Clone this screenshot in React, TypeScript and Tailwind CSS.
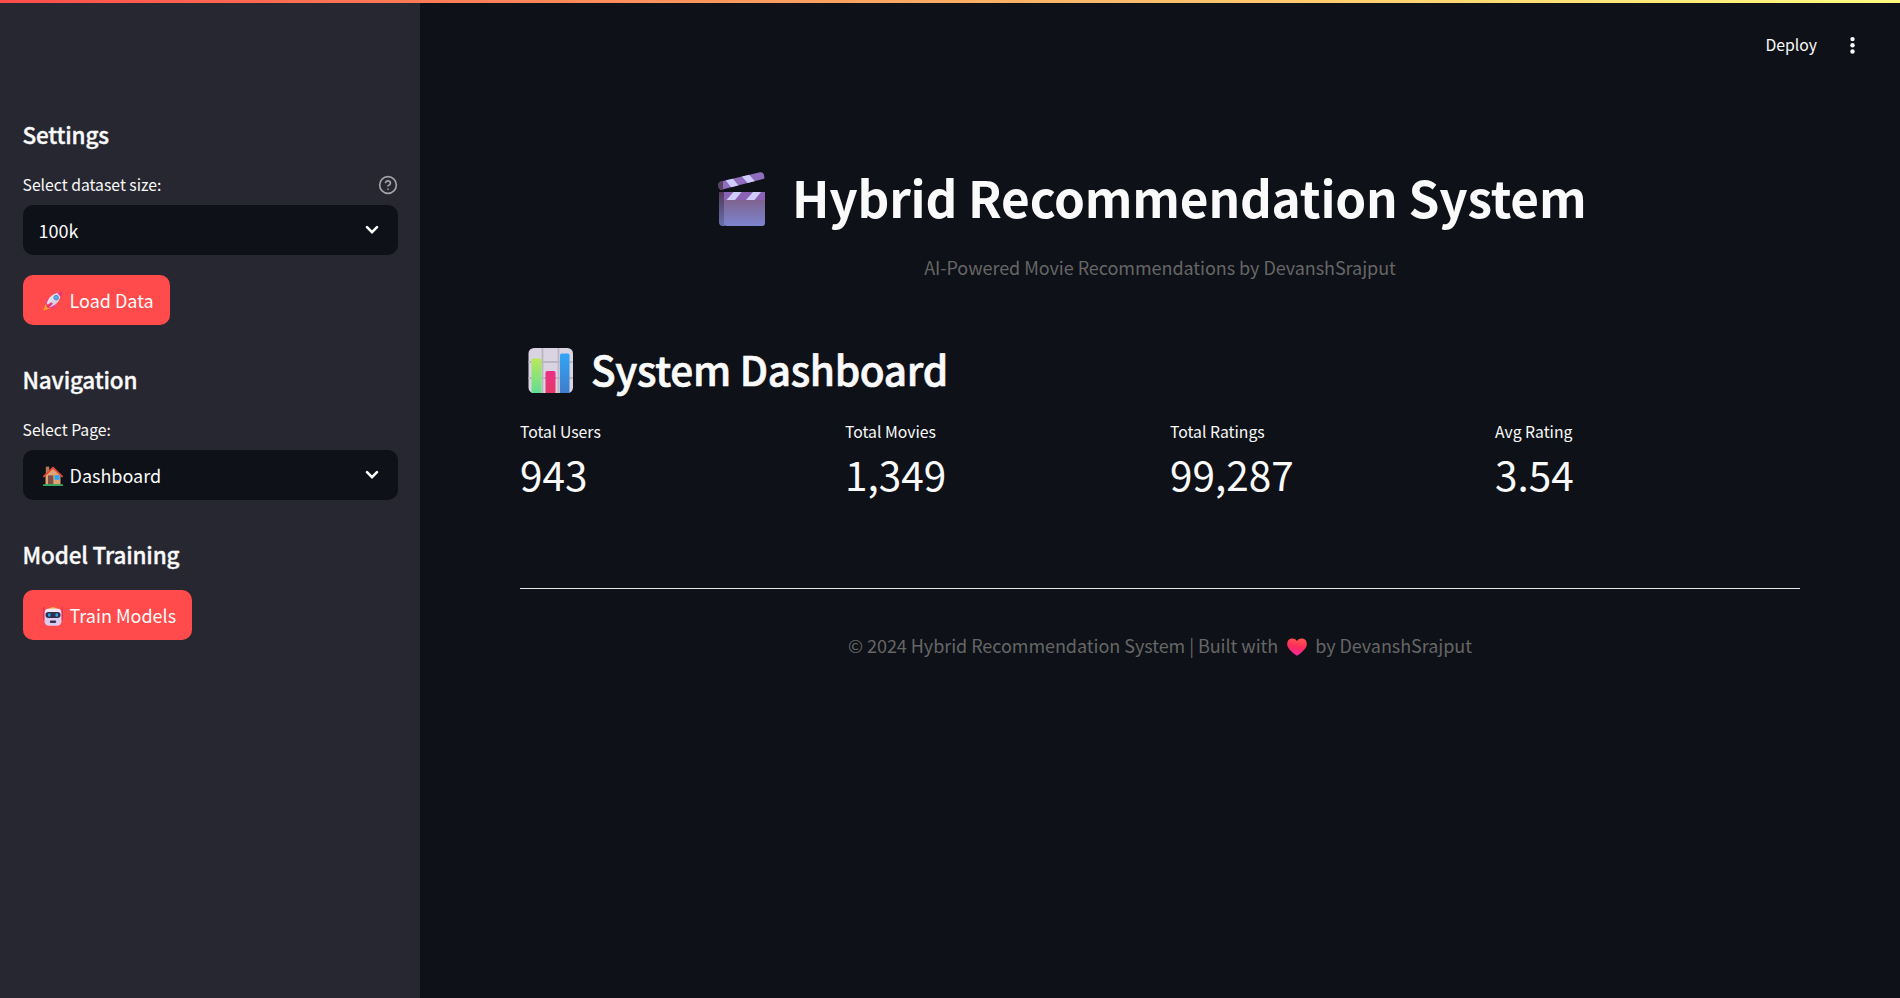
import React from "react";

function Rocket() {
  return (
    <svg viewBox="0 0 32 32" className="mt-[2px] block h-[20px] w-[20px] shrink-0">
      <defs>
        <linearGradient id="rk" x1="0" y1="0" x2="1" y2="1"><stop offset="0" stopColor="#f3eef8" /><stop offset="1" stopColor="#cbbcd8" /></linearGradient>
      </defs>
      <path d="M4 21 L0.500 31.500 L11 28 Z" fill="#ff9f2e" />
      <path d="M12 11 C7 11 4 15 3 20 L9 18 Z" fill="#e8408a" />
      <path d="M21 19 C21 25 17 28 13 30 L13.500 23 Z" fill="#e8408a" />
      <path d="M6 20 C8 12 15 3 28 2.500 C29.500 16 20 23 11.500 26 Z" fill="url(#rk)" />
      <path d="M23 3.500 C26 2 29 1 31 0.500 C31 4 30 7 28.500 9.500 Z" fill="#e5337c" />
      <path d="M13 18 L16 20.500 L8 27.500 L5 24 Z" fill="#e5337c" />
      <circle cx="21" cy="10.500" r="4.200" fill="#5c7fae" />
      <circle cx="21" cy="10.500" r="3" fill="#4fb0f2" />
    </svg>
  );
}

function House() {
  return (
    <svg viewBox="0 0 32 32" className="mt-[2px] block h-[20px] w-[20px] shrink-0">
      <rect x="4.500" y="1" width="5.500" height="12" fill="#b5795a" />
      <path d="M4 15 L16 4 L28 15 V30 H4 Z" fill="#dfa474" />
      <path d="M1.500 16.500 L16 2.500 L30.500 16.500" fill="none" stroke="#e8483a" strokeWidth="3" strokeLinecap="round" strokeLinejoin="round" />
      <rect x="8" y="15" width="8.500" height="15" fill="#7d4f47" />
      <rect x="18.500" y="14.500" width="8" height="7.500" fill="#2ea4f4" />
      <rect x="0" y="29" width="32" height="3" rx="1" fill="#2fae62" />
    </svg>
  );
}

function Robot() {
  return (
    <svg viewBox="0 0 32 32" className="mt-[2px] block h-[20px] w-[20px] shrink-0">
      <rect x="0" y="1" width="2" height="20" rx="1" fill="#e0315f" />
      <rect x="30" y="1" width="2" height="20" rx="1" fill="#e0315f" />
      <rect x="0" y="13" width="5" height="10" rx="2" fill="#e0315f" />
      <rect x="27" y="13" width="5" height="10" rx="2" fill="#e0315f" />
      <path d="M10 6 C10 0 22 0 22 6 Z" fill="#ffb52e" />
      <rect x="2.500" y="4.500" width="27" height="27" rx="7" fill="#dccdf0" />
      <rect x="3.500" y="4.500" width="25" height="9" rx="4.500" fill="#f0e8f8" />
      <rect x="4" y="9.500" width="24" height="9.500" rx="4.500" fill="#30304a" />
      <rect x="8" y="11.500" width="4" height="5.500" rx="2" fill="#26a6ee" />
      <rect x="20" y="11.500" width="4" height="5.500" rx="2" fill="#26a6ee" />
      <rect x="11" y="23" width="10" height="4" rx="1.500" fill="#3c3450" />
    </svg>
  );
}

function Heart() {
  return (
    <svg viewBox="0 0 20 19" preserveAspectRatio="none" className="mt-[3px] mr-[8px] ml-[9px] block h-[18px] w-[20px] shrink-0">
      <defs>
        <linearGradient id="ht" x1="0.6" y1="0" x2="0.4" y2="1"><stop offset="0" stopColor="#ff5550" /><stop offset="0.5" stopColor="#fb2c5c" /><stop offset="1" stopColor="#f527a4" /></linearGradient>
      </defs>
      <path d="M10 3.200 C8.500 0.300 5.500 0 3.500 0.800 C0.500 2 -0.300 5.500 0.500 8.500 C1.800 12.500 6 16 10 18.800 C14 16 18.200 12.500 19.500 8.500 C20.300 5.500 19.500 2 16.500 0.800 C14.500 0 11.500 0.300 10 3.200 Z" fill="url(#ht)" />
    </svg>
  );
}

function Clapper() {
  return (
    <svg viewBox="0 0 48 55" className="mt-[5px] block h-[55px] w-[48px] shrink-0">
      <defs>
        <linearGradient id="cb" x1="0" y1="0" x2="0" y2="1"><stop offset="0.200" stopColor="#80628c" /><stop offset="1" stopColor="#7c84cf" /></linearGradient>
        <linearGradient id="cs" x1="0" y1="0" x2="0" y2="1"><stop offset="0" stopColor="#523a5c" /><stop offset="1" stopColor="#6870ae" /></linearGradient>
        <clipPath id="arm"><path d="M3 9.500 L42 0.300 Q45.500 0 46 3 L46.500 6.500 L2.500 18 Q0.500 17 0.300 13.500 Q0.300 10.200 3 9.500 Z" /></clipPath>
        <clipPath id="bar"><rect x="6" y="20" width="41" height="8" /></clipPath>
      </defs>
      <g clipPath="url(#arm)">
        <rect width="48" height="20" fill="#8f6fbd" />
        <rect width="5" height="20" fill="#57425f" />
        <path d="M7 7 L14 5 L22 15 L15 17 Z M23 3 L30 1 L38 10 L31 12 Z" fill="#d0cdfd" transform="translate(0,0.500)" />
      </g>
      <path d="M1 20 H7 V54 H5 Q1 54 1 50 Z" fill="url(#cs)" />
      <path d="M6 20 H47 V51 Q47 54 44 54 H9 Q6 54 6 51 Z" fill="url(#cb)" />
      <g clipPath="url(#bar)">
        <rect x="6" y="20" width="41" height="8" fill="#8b63b4" />
        <path d="M15.500 20 H23.500 L17 28 H8.500 Z M35 20 H43 L36.500 28 H28 Z" fill="#d0cdfd" />
      </g>
    </svg>
  );
}

function ChartIcon() {
  return (
    <svg viewBox="0 0 45 45" className="mt-[3px] block h-[45px] w-[45px] shrink-0">
      <defs>
        <linearGradient id="g1" x1="0" y1="0" x2="0" y2="1"><stop offset="0" stopColor="#b9e85c" /><stop offset="1" stopColor="#62dd92" /></linearGradient>
        <linearGradient id="g2" x1="0" y1="0" x2="0" y2="1"><stop offset="0" stopColor="#ec2f86" /><stop offset="1" stopColor="#e33a68" /></linearGradient>
        <linearGradient id="g3" x1="0" y1="0" x2="0" y2="1"><stop offset="0" stopColor="#32a5f6" /><stop offset="1" stopColor="#3f7dcc" /></linearGradient>
      </defs>
      <rect x="0.500" width="44.500" height="45" rx="5.500" fill="#dad3e2" />
      <path d="M14.500 0 V45 M30.500 0 V45 M0.500 14 H45 M0.500 30 H45" stroke="#bcb6c3" strokeWidth="1.800" />
      <path d="M3.500 45 V12 Q3.500 10.500 5 10.500 H12 Q13.500 10.500 13.500 12 V45 Z" fill="url(#g1)" />
      <path d="M17.500 45 V24.500 Q17.500 23 19 23 H26 Q27.500 23 27.500 24.500 V45 Z" fill="url(#g2)" />
      <path d="M32 45 V7 Q32 5.500 33.500 5.500 H40 Q41.500 5.500 41.500 7 V45 Z" fill="url(#g3)" />
    </svg>
  );
}

function Chevron() {
  return (
    <svg viewBox="0 0 14 10" className="mr-[19px] block h-[10px] w-[14px]">
      <path d="M2 2.200 L7 7.200 L12 2.200" fill="none" stroke="#fafafa" strokeWidth="2.600" strokeLinecap="round" strokeLinejoin="miter" />
    </svg>
  );
}

function Heading({ children }: { children: React.ReactNode }) {
  return (
    <h2 className="h-[30px] text-[22.5px] font-medium leading-[30px] tracking-[-0.18px] [-webkit-text-stroke:0.35px_#fafafa]">
      {children}
    </h2>
  );
}

function Label({ children, help }: { children: React.ReactNode; help?: boolean }) {
  return (
    <div className="mt-[22px] mb-[6px] flex h-[28px] items-center justify-between text-[15.75px] leading-[28px]">
      <span>{children}</span>
      {help && (
        <svg viewBox="0 0 24 24" className="block h-[20px] w-[20px]" fill="none" stroke="#a3a3a8" strokeWidth="2" strokeLinecap="round" strokeLinejoin="round">
          <circle cx="12" cy="12" r="10" />
          <path d="M9.090 9a3 3 0 0 1 5.830 1c0 2-3 3-3 3" />
          <path d="M12 17h.01" />
        </svg>
      )}
    </div>
  );
}

function Metric({ label, value }: { label: string; value: string }) {
  return (
    <div className="w-[305px]">
      <div className="h-[28px] text-[15.75px] leading-[28px]">{label}</div>
      <div className="h-[56px] text-[40.5px] leading-[56px]">{value}</div>
    </div>
  );
}

export default function App() {
  return (
    <div className="relative flex h-[998px] w-[1900px] overflow-hidden bg-[#0e1117] font-['Noto_Sans_CJK_SC',sans-serif] text-[#fafafa]">
      <aside className="h-full w-[420px] shrink-0 bg-[#262730] px-[22.5px] pt-[119px]">
        <Heading>Settings</Heading>
        <Label help>Select dataset size:</Label>
        <div className="flex h-[50px] items-center justify-between rounded-[10px] bg-[#0e1117] pl-[16px] text-[18px]">
          <span>100k</span>
          <Chevron />
        </div>
        <button className="mt-[20px] flex h-[50px] w-[147px] items-center gap-[6.5px] rounded-[10px] bg-[#ff4b4b] pl-[20.5px] text-[18px]">
          <Rocket />
          <span>Load Data</span>
        </button>
        <div className="mt-[39px]">
          <Heading>Navigation</Heading>
        </div>
        <Label>Select Page:</Label>
        <div className="flex h-[50px] items-center justify-between rounded-[10px] bg-[#0e1117] pl-[20.5px] text-[18px]">
          <span className="flex items-center gap-[6.5px]">
            <House />
            <span>Dashboard</span>
          </span>
          <Chevron />
        </div>
        <div className="mt-[39px]">
          <Heading>Model Training</Heading>
        </div>
        <button className="mt-[21px] flex h-[50px] w-[169px] items-center gap-[6.5px] rounded-[10px] bg-[#ff4b4b] pl-[20.5px] text-[18px]">
          <Robot />
          <span>Train Models</span>
        </button>
      </aside>
      <main className="w-[1480px]">
        <header className="flex h-[90px] items-center justify-end gap-[33px] pr-[45px] text-[15.75px]">
          <span>Deploy</span>
          <svg viewBox="0 0 5 18" className="block h-[18px] w-[5px]" fill="#fafafa">
            <circle cx="2.500" cy="3.100" r="2.200" />
            <circle cx="2.500" cy="9.300" r="2.200" />
            <circle cx="2.500" cy="15.500" r="2.200" />
          </svg>
        </header>
        <div className="px-[100px]">
          <h1 className="mt-[74px] flex h-[66px] items-center gap-[26px] pl-[198px] text-[49.5px] font-bold leading-[66px] tracking-[-0.2px] whitespace-nowrap">
            <Clapper />
            <span>Hybrid Recommendation System</span>
          </h1>
          <p className="mt-[22px] h-[30px] text-center text-[18px] leading-[30px] tracking-[-0.05px] text-[#666666]">
            AI-Powered Movie Recommendations by DevanshSrajput
          </p>
          <h2 className="mt-[57px] flex h-[60px] items-center gap-[18px] pl-[8px] text-[40.5px] font-medium leading-[60px] tracking-[-0.3px] [-webkit-text-stroke:0.7px_#fafafa]">
            <ChartIcon />
            <span>System Dashboard</span>
          </h2>
          <div className="mt-[19px] flex gap-[20px]">
            <Metric label="Total Users" value="943" />
            <Metric label="Total Movies" value="1,349" />
            <Metric label="Total Ratings" value="99,287" />
            <Metric label="Avg Rating" value="3.54" />
          </div>
          <div className="mt-[86px] h-px bg-[#e6e6e6]" />
          <p className="mt-[41px] flex h-[30px] items-center justify-center text-[18px] leading-[30px] tracking-[-0.05px] text-[#666666]">
            <span>© 2024 Hybrid Recommendation System | Built with</span>
            <Heart />
            <span>by DevanshSrajput</span>
          </p>
        </div>
      </main>
      <div className="absolute top-0 left-0 h-[3px] w-full bg-linear-to-r from-[#ff4b4b] to-[#fffd80]" />
    </div>
  );
}
